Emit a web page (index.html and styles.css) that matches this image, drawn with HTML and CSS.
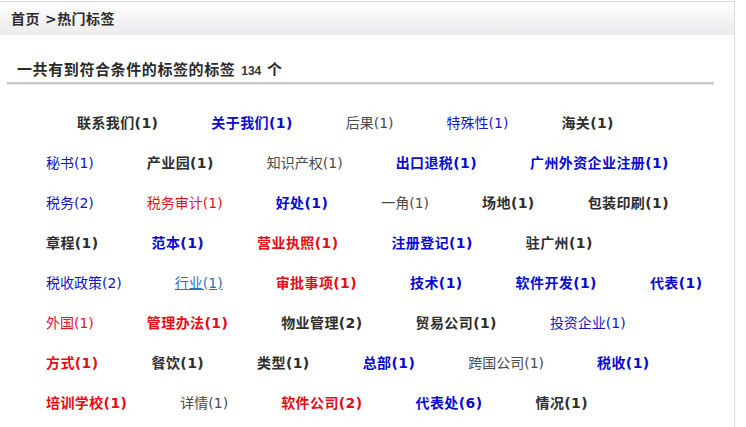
FILE: index.html
```html
<!DOCTYPE html>
<html lang="zh-CN">
<head>
<meta charset="utf-8">
<title>热门标签</title>
<link rel="stylesheet" href="styles.css">
</head>
<body>
<div class="panel">
  <div class="panel-head">首页 &gt;热门标签</div>
  <div class="summary">一共有到符合条件的标签的标签 <span class="num">134</span> 个</div>
  <ul class="tags">
    <li><a class="b dark" href="#">联系我们(1)</a></li>
    <li><a class="b blue" href="#">关于我们(1)</a></li>
    <li><a class="n gray" href="#">后果(1)</a></li>
    <li><a class="n blue" href="#">特殊性(1)</a></li>
    <li><a class="b dark" href="#">海关(1)</a></li>
    <li><a class="n blue" href="#">秘书(1)</a></li>
    <li><a class="b dark" href="#">产业园(1)</a></li>
    <li><a class="n gray" href="#">知识产权(1)</a></li>
    <li><a class="b blue" href="#">出口退税(1)</a></li>
    <li><a class="b blue" href="#">广州外资企业注册(1)</a></li>
    <li><a class="n blue" href="#">税务(2)</a></li>
    <li><a class="n red" href="#">税务审计(1)</a></li>
    <li><a class="b blue" href="#">好处(1)</a></li>
    <li><a class="n gray" href="#">一角(1)</a></li>
    <li><a class="b dark" href="#">场地(1)</a></li>
    <li><a class="b dark" href="#">包装印刷(1)</a></li>
    <li><a class="b dark" href="#">章程(1)</a></li>
    <li><a class="b blue" href="#">范本(1)</a></li>
    <li><a class="b red" href="#">营业执照(1)</a></li>
    <li><a class="b blue" href="#">注册登记(1)</a></li>
    <li><a class="b dark" href="#">驻广州(1)</a></li>
    <li><a class="n blue" href="#">税收政策(2)</a></li>
    <li><a class="n hover" href="#">行业(1)</a></li>
    <li><a class="b red" href="#">审批事项(1)</a></li>
    <li><a class="b blue" href="#">技术(1)</a></li>
    <li><a class="b blue" href="#">软件开发(1)</a></li>
    <li><a class="b blue" href="#">代表(1)</a></li>
    <li><a class="n red" href="#">外国(1)</a></li>
    <li><a class="b red" href="#">管理办法(1)</a></li>
    <li><a class="b dark" href="#">物业管理(2)</a></li>
    <li><a class="b dark" href="#">贸易公司(1)</a></li>
    <li><a class="n blue" href="#">投资企业(1)</a></li>
    <li><a class="b red" href="#">方式(1)</a></li>
    <li><a class="b dark" href="#">餐饮(1)</a></li>
    <li><a class="b dark" href="#">类型(1)</a></li>
    <li><a class="b blue" href="#">总部(1)</a></li>
    <li><a class="n gray" href="#">跨国公司(1)</a></li>
    <li><a class="b blue" href="#">税收(1)</a></li>
    <li><a class="b red" href="#">培训学校(1)</a></li>
    <li><a class="n gray" href="#">详情(1)</a></li>
    <li><a class="b red" href="#">软件公司(2)</a></li>
    <li><a class="b blue" href="#">代表处(6)</a></li>
    <li><a class="b dark" href="#">情况(1)</a></li>
  </ul>
</div>
</body>
</html>
```
FILE: styles.css
```css
html, body {
  margin: 0;
  padding: 0;
  background: #fff;
}
body {
  font-family: "DejaVu Sans", "Noto Sans CJK SC", sans-serif;
  font-size: 14px;
  color: #333;
  padding-top: 1px;
}
.panel {
  width: 735px;
  min-height: 426px;
  border-top: 1px solid #d8d8d8;
  border-right: 1px solid #dcdcdc;
  box-sizing: border-box;
}
.panel-head {
  height: 33px;
  line-height: 35px;
  padding-left: 11px;
  font-weight: bold;
  font-size: 14px;
  letter-spacing: 0.4px;
  color: #2b2b2b;
  background: linear-gradient(to bottom, #ffffff 0%, #f3f3f4 55%, #ececee 100%);
}
.summary {
  margin: 0 20px 0 7px;
  padding: 25px 0 0 10px;
  line-height: 21px;
  font-size: 15px;
  letter-spacing: 0.6px;
  font-weight: bold;
  color: #2b2b2b;
  border-bottom: 2px solid #c9c9c9;
  box-shadow: 0 1px 0 #e4e4e4;
}
.summary .num {
  font-family: "Liberation Sans", sans-serif;
  font-size: 12px;
  letter-spacing: 0;
  color: #333;
}
.tags {
  list-style: none;
  margin: 0;
  padding: 19px 0 0 46px;
  width: 662px;
  display: flex;
  flex-wrap: wrap;
  column-gap: 53px;
}
.tags li {
  line-height: 40px;
  white-space: nowrap;
}
.tags li:first-child {
  margin-left: 31px;
}
.tags a {
  text-decoration: none;
}
.tags a.b {
  font-weight: bold;
  letter-spacing: 0.4px;
}
.tags a.n {
  font-weight: normal;
}
.dark { color: #2e2e2e; }
.gray { color: #4a4a4a; }
.blue { color: #1414c8; }
.b.blue { color: #0a0ad0; }
.red { color: #e0141e; }
.b.red { color: #e80c14; }
.hover {
  color: #2f6fc0;
  text-decoration: underline !important;
}
```
